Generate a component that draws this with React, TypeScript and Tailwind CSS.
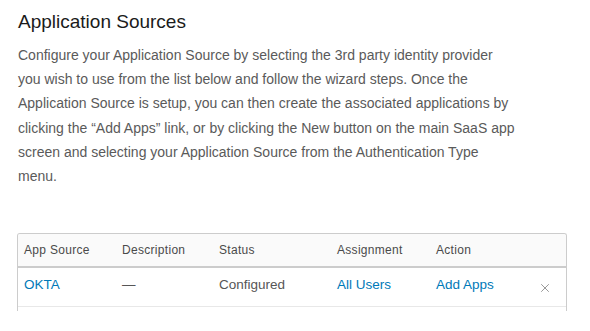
import React from 'react';
import { X } from 'lucide-react';

const cols = 'grid grid-cols-[98px_97px_118px_99px_93px_1fr]';

const App = () => {
  return (
    <div className="w-[590px] h-[331px] bg-white overflow-hidden font-['Liberation_Sans',sans-serif]">
      <div className="pl-[18px] pt-[9px] pr-[20px]">
        {/* Title */}
        <h2 className="text-[19px] leading-[26px] text-[#1b1b1b]">Application Sources</h2>

        {/* Intro copy */}
        <p className="mt-[8px] w-[500px] text-[14px] leading-[24.2px] text-[#5a5a5a]">
          Configure your Application Source by selecting the 3rd party identity provider you wish to use from the list below and follow the wizard steps. Once the Application Source is setup, you can then create the associated applications by clicking the “Add Apps” link, or by clicking the New button on the main SaaS app screen and selecting your Application Source from the Authentication Type menu.
        </p>
      </div>

      {/* Sources table, cut off after the first row */}
      <div className="ml-[17px] mt-[45px] w-[550px] h-[78px] overflow-hidden border-x border-t border-[#cccccc] rounded-t-[3px]">
        <div className={`${cols} h-[34px] items-center bg-[#fafafa] border-b-2 border-[#cccccc] text-[12px] text-[#4a4a4a] tracking-[0.3px]`}>
          <div className="pl-[6px]">App Source</div>
          <div className="pl-[6px]">Description</div>
          <div className="pl-[6px]">Status</div>
          <div className="pl-[6px]">Assignment</div>
          <div className="pl-[6px]">Action</div>
          <div />
        </div>
        <div className={`${cols} h-[39px] items-center pb-[4px] border-b border-[#e8e8e8] text-[13.5px]`}>
          <div className="pl-[6px] text-[#0079b8]">OKTA</div>
          <div className="pl-[6px] text-[#565656]">—</div>
          <div className="pl-[6px] text-[#565656]">Configured</div>
          <div className="pl-[6px] text-[#0079b8]">All Users</div>
          <div className="pl-[6px] text-[#0079b8]">Add Apps</div>
          <div className="flex justify-center pt-[5px]">
            <X className="w-[14px] h-[14px] text-[#8a8a8a]" strokeWidth={1.5} />
          </div>
        </div>
        <div className="h-[10px]" />
      </div>
    </div>
  );
};

export default App;
